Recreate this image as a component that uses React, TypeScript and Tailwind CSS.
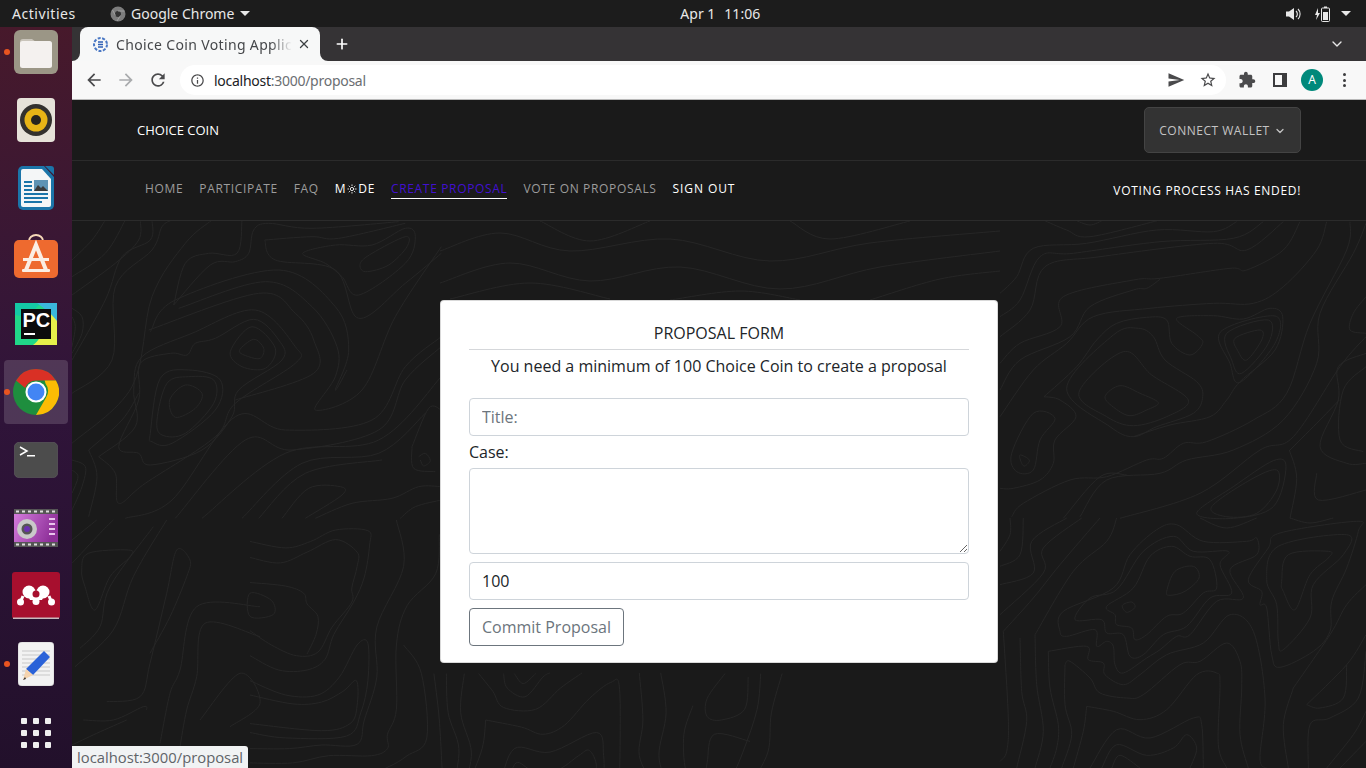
import { ChevronDown, Plus, Sun, X } from 'lucide-react';

type Pt = [number, number];
type Trace = { ox: number; oy: number; s: number; open?: Pt[][]; closed?: Pt[][] };

// smooth line through traced points (catmull-rom), coords are screen pixels
const smooth = (pts: Pt[], closed: boolean) => {
  const n = pts.length;
  const at = (i: number) => (closed ? pts[(i + n) % n] : pts[Math.max(0, Math.min(n - 1, i))]);
  let d = `M${pts[0][0].toFixed(1)} ${pts[0][1].toFixed(1)}`;
  const last = closed ? n : n - 1;
  for (let i = 0; i < last; i++) {
    const [p0, p1, p2, p3] = [at(i - 1), at(i), at(i + 1), at(i + 2)];
    const c1 = [p1[0] + (p2[0] - p0[0]) / 6, p1[1] + (p2[1] - p0[1]) / 6];
    const c2 = [p2[0] - (p3[0] - p1[0]) / 6, p2[1] - (p3[1] - p1[1]) / 6];
    d += `C${c1[0].toFixed(1)} ${c1[1].toFixed(1)} ${c2[0].toFixed(1)} ${c2[1].toFixed(1)} ${p2[0].toFixed(1)} ${p2[1].toFixed(1)}`;
  }
  return closed ? d + 'Z' : d;
};

const traces: Trace[] = [
  {
    ox: 1000, oy: 220, s: 3,
    closed: [
      [[315, 530], [360, 497], [420, 520], [475, 548], [440, 570], [390, 587], [345, 565]],
      [[237, 517], [370, 395], [455, 465], [565, 540], [500, 590], [400, 617], [320, 590]],
      [[200, 505], [340, 345], [415, 325], [460, 350], [495, 420], [590, 485], [608, 530], [580, 580], [470, 620], [400, 650], [330, 620]],
      [[705, 355], [780, 330], [785, 360], [740, 420], [715, 395]],
      [[680, 340], [805, 300], [805, 370], [725, 460], [695, 420]],
      [[662, 335], [825, 288], [825, 370], [720, 487], [690, 430]],
      [[60, 705], [88, 720], [75, 738], [65, 730]],
      [[35, 700], [100, 580], [165, 595], [120, 660], [100, 750], [50, 755]],
      [[590, 880], [700, 800], [820, 722], [858, 740], [820, 860], [700, 895]],
      [[635, 860], [750, 780], [830, 750], [830, 810], [770, 880], [680, 890]],
    ],
    open: [
      [[132, 530], [230, 440], [290, 360], [350, 310], [440, 292], [500, 300], [515, 370], [570, 405], [608, 370], [590, 345], [530, 295], [640, 287], [730, 297], [810, 265], [848, 290], [825, 390], [720, 485], [680, 540], [630, 590], [510, 615], [400, 650]],
      [[132, 530], [180, 540], [228, 590], [165, 660], [160, 730], [120, 780], [40, 805], [0, 805]],
      [[0, 220], [50, 170], [100, 85], [260, 70], [470, 30], [640, 35], [710, 5]],
      [[0, 290], [60, 240], [120, 110], [220, 100], [480, 65], [700, 55], [790, 5]],
      [[0, 350], [90, 270], [135, 140], [300, 110], [640, 70], [740, 90], [850, 5]],
      [[0, 430], [60, 370], [180, 320], [190, 230], [400, 180], [480, 175], [690, 145], [740, 150], [850, 90], [900, 5]],
      [[0, 510], [60, 420], [210, 350], [270, 260], [400, 210], [440, 205], [480, 178]],
      [[0, 590], [100, 450], [200, 370], [280, 290], [450, 265], [640, 250], [760, 250], [850, 200], [950, 90], [980, 5]],
      [[35, 890], [70, 850], [210, 780], [320, 770], [440, 720], [490, 715], [550, 670], [620, 665], [760, 600], [860, 520], [930, 310], [1040, 90], [1050, 5]],
      [[190, 895], [300, 770], [380, 765]],
      [[240, 890], [320, 780], [480, 760], [560, 720], [700, 690], [850, 600], [950, 430], [960, 280], [1060, 100], [1098, 10]],
      [[360, 895], [600, 820], [780, 690], [880, 650], [1020, 440], [1098, 350]],
      [[1098, 340], [1050, 330], [1060, 280], [1098, 230]],
      [[1098, 440], [1030, 510], [1020, 660], [1090, 695]],
      [[1098, 400], [1015, 440], [1015, 540], [960, 680], [1040, 730], [1098, 730]],
      [[870, 690], [950, 610], [1018, 540]],
      [[870, 895], [890, 775], [868, 690]],
      [[950, 760], [955, 840], [1098, 810]],
      [[130, 0], [200, 30], [270, 50], [480, 0]],
      [[225, 0], [270, 15], [310, 0]],
    ],
  },
  {
    ox: 72, oy: 220, s: 3,
    closed: [
      [[293, 540], [340, 495], [390, 520], [370, 565], [310, 592]],
      [[255, 600], [285, 490], [350, 470], [425, 480], [425, 550], [340, 640], [270, 645]],
      [[235, 640], [265, 475], [350, 450], [445, 480], [430, 570], [300, 670], [240, 665]],
      [[502, 392], [545, 358], [575, 385], [565, 415], [530, 410]],
      [[475, 395], [540, 320], [610, 385], [580, 445], [510, 440]],
      [[140, 680], [200, 540], [205, 430], [295, 400], [345, 405], [370, 370], [430, 355], [545, 298], [620, 360], [630, 420], [500, 510], [480, 590], [390, 690], [235, 735], [200, 700]],
      [[692, 100], [790, 75], [900, 75], [1000, 25], [1030, 50], [1000, 130], [860, 225], [810, 170], [760, 130]],
      [[865, 130], [900, 100], [1000, 50], [1005, 80], [950, 135], [880, 155]],
    ],
    open: [
      [[80, 710], [190, 620], [185, 510], [210, 410], [360, 340], [550, 270], [670, 380], [670, 430], [490, 550], [430, 650], [220, 790], [140, 850], [130, 760], [80, 710]],
      [[235, 335], [310, 240], [620, 150], [790, 260], [830, 390], [790, 510], [825, 450]],
      [[320, 265], [580, 185], [720, 260], [795, 380], [790, 470], [730, 570], [870, 510], [970, 290], [1108, 80]],
      [[230, 330], [560, 220], [670, 280], [725, 360], [725, 460], [490, 540]],
      [[305, 255], [415, 135], [490, 125], [530, 100], [545, 30], [590, 10], [720, 25], [980, 5]],
      [[578, 60], [720, 50], [800, 55], [1000, 10]],
      [[578, 60], [610, 120], [790, 150], [860, 295], [1000, 190], [1108, 100]],
      [[305, 255], [340, 130], [410, 100], [495, 100], [510, 0]],
      [[0, 120], [60, 60], [100, 0]],
      [[0, 170], [100, 100], [160, 0]],
      [[0, 225], [130, 130], [200, 60], [205, 0]],
      [[0, 420], [100, 240], [150, 110], [235, 60], [240, 0]],
      [[0, 520], [120, 420], [130, 200], [240, 90], [270, 20], [300, 0]],
      [[0, 670], [180, 500], [240, 230], [340, 70], [420, 0]],
      [[0, 265], [30, 290], [30, 340], [0, 400]],
      [[0, 290], [10, 320], [0, 380]],
      [[0, 720], [40, 740], [30, 800], [0, 870]],
      [[0, 750], [18, 770], [0, 820]],
      [[50, 690], [75, 770], [50, 890]],
      [[50, 690], [150, 600], [200, 520]],
      [[160, 895], [300, 840], [490, 590], [640, 630], [900, 600], [1000, 440], [1108, 350]],
      [[310, 895], [520, 660], [660, 690], [920, 630], [1000, 480], [1108, 380]],
      [[390, 895], [640, 700], [920, 660], [1108, 470]],
      [[510, 895], [690, 730], [920, 700], [1060, 580]],
      [[560, 895], [700, 760], [930, 720]],
      [[630, 895], [710, 805], [805, 800], [810, 825], [700, 895]],
      [[1108, 800], [1040, 800], [960, 835], [840, 850], [730, 895]],
      [[1108, 840], [1030, 860], [985, 895]],
      [[1020, 680], [1070, 565], [1108, 570]],
      [[1020, 680], [1025, 745], [1090, 755]],
      [[1040, 710], [1060, 700], [1075, 722], [1055, 738], [1045, 720]],
    ],
  },
  {
    ox: 250, oy: 520, s: 2.8,
    closed: [[[0, 205], [60, 225], [65, 265], [0, 270]]],
    open: [
      [[0, 60], [100, 78], [170, 60], [240, 28], [330, 30], [335, 70], [320, 160], [290, 230], [235, 320], [210, 390], [160, 420], [80, 420], [0, 380]],
      [[0, 105], [85, 120], [160, 90], [240, 55], [300, 90], [300, 130], [285, 190], [285, 230], [230, 300], [190, 370], [130, 380], [60, 350], [0, 310]],
      [[0, 175], [100, 185], [150, 205], [160, 235], [190, 270], [185, 320], [160, 375]],
      [[0, 450], [100, 490], [190, 490], [250, 440], [300, 350], [330, 345], [330, 450], [310, 540], [270, 605], [100, 610], [0, 595]],
      [[0, 490], [120, 515], [200, 510], [260, 480], [298, 450], [300, 520], [280, 570], [200, 590], [0, 570]],
      [[0, 640], [110, 640], [200, 630], [300, 628], [320, 560], [355, 440], [355, 300], [430, 130], [410, 0]],
      [[0, 680], [120, 680], [220, 660], [340, 660], [385, 640], [385, 600], [410, 530], [410, 350], [440, 240], [520, 150], [530, 40]],
      [[0, 710], [150, 720], [210, 700], [330, 710], [390, 690], [440, 660], [495, 610], [480, 430], [430, 350]],
      [[660, 560], [760, 580], [820, 600], [880, 575], [950, 500], [1010, 455], [1035, 475], [1035, 744]],
      [[660, 560], [650, 640], [610, 744]],
      [[700, 744], [740, 640], [840, 650], [970, 595], [990, 660], [990, 744]],
      [[720, 744], [745, 680], [790, 700], [860, 700], [920, 660], [950, 645], [970, 690], [950, 744]],
      [[745, 744], [760, 705], [840, 744]],
      [[640, 430], [680, 480], [710, 525], [800, 530], [870, 470], [930, 428]],
      [[710, 430], [720, 470], [770, 495], [820, 440], [840, 428]],
      [[740, 430], [765, 458], [800, 430]],
      [[1090, 428], [1100, 560], [1090, 660], [1130, 744]],
      [[1150, 428], [1165, 540], [1145, 660], [1170, 744]],
      [[1330, 430], [1280, 500], [1280, 550], [1320, 560], [1385, 530], [1395, 440]],
      [[1240, 520], [1215, 600], [1220, 700], [1250, 744]],
      [[1400, 620], [1300, 600], [1280, 680], [1270, 744]],
      [[1430, 430], [1420, 530], [1380, 650], [1340, 744]],
      [[1490, 430], [1460, 540], [1450, 650], [1400, 744]],
      [[600, 430], [590, 540], [620, 650], [600, 744]],
      [[550, 430], [555, 540], [585, 640], [570, 744]],
      [[515, 430], [530, 560], [540, 744]],
    ],
  },
  {
    ox: 1000, oy: 518, s: 3,
    closed: [
      [[180, 340], [190, 280], [340, 210], [390, 110], [470, 35], [530, 20], [610, 70], [740, 70], [770, 60], [770, 110], [690, 155], [730, 240], [650, 250], [570, 350], [530, 355], [480, 395], [440, 420], [370, 465], [345, 440], [340, 385], [320, 370], [290, 385], [285, 335], [200, 355]],
      [[225, 305], [270, 240], [350, 215], [430, 100], [520, 55], [580, 100], [685, 100], [660, 140], [695, 225], [630, 240], [560, 325], [490, 350], [430, 410], [390, 415], [370, 350], [320, 345], [305, 305]],
      [[320, 265], [400, 210], [450, 115], [515, 85], [570, 115], [630, 125], [650, 210], [610, 225], [550, 285], [500, 295], [440, 350], [405, 365], [395, 330], [350, 320], [345, 290]],
      [[500, 220], [525, 160], [580, 145], [597, 180], [555, 220], [510, 232]],
      [[367, 262], [395, 252], [405, 268], [380, 283]],
      [[845, 190], [865, 110], [985, 100], [985, 120], [930, 170], [885, 275], [850, 220]],
      [[800, 185], [835, 85], [1040, 50], [1030, 110], [940, 200], [930, 300], [850, 395], [835, 370], [830, 260]],
      [[745, 185], [805, 90], [840, 45], [1070, 10], [1075, 40], [1040, 150], [995, 250], [990, 340], [940, 400], [840, 448], [815, 410], [800, 270], [780, 260], [785, 220]],
    ],
    open: [
      [[145, 400], [260, 385], [265, 425], [310, 435], [315, 470], [370, 500], [420, 470], [500, 410], [610, 375], [690, 290], [760, 340], [795, 540], [780, 720], [800, 750]],
      [[145, 400], [150, 510], [175, 620], [170, 690], [150, 750]],
      [[195, 440], [210, 430], [270, 480], [300, 525], [380, 540], [430, 530], [540, 440], [600, 430], [680, 375], [720, 430], [725, 510], [720, 650], [745, 750]],
      [[195, 440], [195, 560], [215, 650], [185, 750]],
      [[260, 565], [340, 580], [420, 605], [500, 575], [590, 470], [650, 465], [660, 500], [655, 680], [680, 750]],
      [[260, 565], [250, 640], [220, 750]],
      [[270, 750], [350, 635], [450, 660], [580, 600], [605, 620], [610, 750]],
      [[305, 750], [350, 680], [440, 712], [520, 690], [560, 650], [590, 690], [570, 750]],
      [[335, 750], [360, 712], [420, 750]],
      [[0, 200], [100, 165], [95, 70], [200, 0]],
      [[0, 145], [60, 110], [70, 0]],
      [[0, 100], [30, 50], [30, 0]],
      [[0, 290], [130, 165], [130, 90], [245, 0]],
      [[10, 340], [100, 240], [180, 140], [300, 0]],
      [[10, 340], [25, 600], [20, 700], [0, 730]],
      [[60, 360], [65, 520], [80, 610], [50, 750]],
      [[105, 350], [110, 500], [130, 640], [105, 750]],
      [[105, 350], [220, 160], [320, 70], [350, 0]],
      [[920, 560], [1040, 440], [1098, 350]],
      [[920, 560], [960, 570], [1030, 540], [1040, 440]],
      [[1098, 400], [1075, 540], [990, 600], [930, 620], [925, 750]],
      [[1098, 580], [1060, 650], [980, 750]],
      [[880, 510], [850, 620], [865, 750]],
      [[880, 510], [990, 350], [1040, 260], [1098, 200]],
      [[1098, 670], [1020, 750]],
      [[600, 0], [680, 30], [770, 0]],
      [[870, 0], [930, 15], [1000, 0]],
    ],
  },
  {
    ox: 0, oy: 520, s: 3,
    closed: [[[245, 150], [265, 100], [385, 90], [390, 110], [330, 170], [285, 270], [255, 200]]],
    open: [
      [[216, 130], [300, 40], [340, 0]],
      [[216, 60], [290, 0]],
      [[240, 385], [300, 320], [330, 200], [460, 20]],
      [[225, 440], [340, 330], [400, 170], [500, 0]],
      [[320, 545], [420, 530], [450, 430], [500, 220], [530, 90], [570, 120], [560, 170], [510, 290], [450, 400]],
      [[600, 600], [720, 460], [780, 550], [690, 620]],
      [[780, 260], [590, 260], [540, 450], [510, 520], [480, 670]],
      [[780, 350], [615, 310], [590, 470], [560, 570], [540, 680]],
      [[250, 600], [340, 600], [430, 560], [440, 570]],
      [[216, 675], [290, 640], [380, 600]],
    ],
  },
  {
    // top middle, above the card
    ox: 440, oy: 221, s: 1,
    open: [
      [[0, 30], [60, 12], [130, 30], [230, 18], [330, 40], [430, 22], [560, 10]],
      [[0, 62], [70, 42], [150, 60], [240, 46], [340, 68], [440, 46], [560, 30]],
      [[10, 78], [90, 62], [170, 78]],
      [[230, 79], [300, 70], [360, 79]],
      [[430, 79], [500, 58], [560, 50]],
      [[100, 0], [150, 20], [210, 0]],
      [[350, 0], [390, 18], [470, 0]],
    ],
  },
];

const contourPaths = traces.flatMap((t) => {
  const map = (pts: Pt[]): Pt[] => pts.map(([x, y]) => [t.ox + x / t.s, t.oy + y / t.s]);
  return [
    ...(t.open ?? []).map((p) => smooth(map(p), false)),
    ...(t.closed ?? []).map((p) => smooth(map(p), true)),
  ];
});

const Mi = ({ d, size = 20, className = '' }: { d: string; size?: number; className?: string }) => (
  <svg width={size} height={size} viewBox="0 0 24 24" className={className} fill="currentColor">
    <path d={d} />
  </svg>
);

const Caret = ({ className = '' }: { className?: string }) => (
  <svg width="10" height="5" viewBox="0 0 10 5" className={className} fill="currentColor">
    <path d="M0 0h10L5 5z" />
  </svg>
);

const DockItem = ({ dot, active, children }: { dot?: boolean; active?: boolean; children: React.ReactNode }) => (
  <div className="relative flex h-[68px] w-[72px] shrink-0 items-center justify-center">
    {active && <div className="absolute left-1 top-0.5 h-16 w-16 rounded-[4px] bg-white/15" />}
    {dot && <div className="absolute left-1 top-1/2 z-10 h-1.5 w-1.5 -translate-y-1/2 rounded-full bg-[#e95420]" />}
    <div className="relative flex">{children}</div>
  </div>
);

const ChromeLogo = ({ size = 46 }: { size?: number }) => (
  <svg width={size} height={size} viewBox="0 0 48 48">
    <circle cx="24" cy="24" r="24" fill="#1e8e3e" />
    <path d="M24 0a24 24 0 0 1 20.8 12H24a12 12 0 0 0-11.3 7.9L3.2 12A24 24 0 0 1 24 0z" fill="#d93025" />
    <path d="M44.8 12A24 24 0 0 1 24 48l10.4-18A12 12 0 0 0 34 15.5L33 12z" fill="#fbbc04" />
    <circle cx="24" cy="24" r="11" fill="#fff" />
    <circle cx="24" cy="24" r="8.8" fill="#4285f4" />
  </svg>
);

const Dock = () => (
  <div className="flex h-full w-[72px] shrink-0 flex-col overflow-hidden bg-gradient-to-b from-[#47192b] via-[#30143a] to-[#22102b]">
    <div className="-mt-[9px] flex flex-col">
      <DockItem dot>
        <svg width="44" height="44" viewBox="0 0 44 44">
          <rect width="44" height="44" rx="6" fill="#9b9686" />
          <path d="M6 12a3 3 0 0 1 3-3h9l4 3h13a3 3 0 0 1 3 3v3H6z" fill="#c9c4ba" />
          <rect x="6" y="11" width="32" height="27" rx="2.5" fill="#f4f1ef" />
        </svg>
      </DockItem>
      <DockItem>
        <svg width="38" height="44" viewBox="0 0 38 44">
          <rect width="38" height="44" rx="4" fill="#e6e2d9" />
          <circle cx="19" cy="22" r="16" fill="#33312e" />
          <circle cx="19" cy="22" r="11.5" fill="#e7b416" />
          <circle cx="19" cy="22" r="5" fill="#26241f" />
        </svg>
      </DockItem>
      <DockItem>
        <svg width="36" height="44" viewBox="0 0 36 44">
          <path d="M5 0h21l10 11v28a5 5 0 0 1-5 5H5a5 5 0 0 1-5-5V5a5 5 0 0 1 5-5z" fill="#1b75a9" />
          <path d="M5 3h19l9 10v26a2 2 0 0 1-2 2H5a2 2 0 0 1-2-2V5a2 2 0 0 1 2-2z" fill="#f4f6f7" />
          <path d="M27 0h6a3 3 0 0 1 3 3v6z" fill="#1b75a9" />
          <path d="M6 15h8v2H6zm0 4h8v2H6zm0 4h8v2H6zm0 4h24v2H6zm0 4h24v2H6zm0 4h18v2H6z" fill="#1b75a9" />
          <rect x="16" y="14" width="14" height="11" fill="#5e93b4" />
          <path d="M16 25l4-6 3 3 2-2 5 5z" fill="#3b3b3b" />
        </svg>
      </DockItem>
      <DockItem>
        <svg width="44" height="44" viewBox="0 0 44 44">
          <path d="M15 7a7 6 0 0 1 14 0" fill="none" stroke="#f6d9b8" strokeWidth="2" />
          <rect y="6" width="44" height="38" rx="5" fill="#ee6a2f" />
          <path d="M12 36L22 11l10 25" fill="none" stroke="#fbeee4" strokeWidth="4" />
          <rect x="9" y="24" width="26" height="3" fill="#fbeee4" />
          <rect x="8" y="35" width="28" height="3" rx="1" fill="#fbeee4" />
        </svg>
      </DockItem>
      <DockItem>
        <svg width="42" height="42" viewBox="0 0 42 42">
          <rect width="42" height="42" fill="#21d789" />
          <path d="M0 0h26L12 14 0 12z" fill="#14c9a5" />
          <path d="M42 42H18C30 34 26 22 30 8l12-2z" fill="#e6f04a" />
          <path d="M22 0h20v18C36 10 30 6 22 0z" fill="#3ab8dc" />
          <rect x="6" y="6" width="30" height="30" fill="#0c0c0c" />
          <text x="7.500" y="24" fontSize="20" fontWeight="700" fill="#fff" fontFamily="'Liberation Sans', sans-serif">PC</text>
          <rect x="9" y="30" width="11" height="2" fill="#fff" />
        </svg>
      </DockItem>
      <DockItem dot active>
        <ChromeLogo />
      </DockItem>
      <DockItem>
        <svg width="44" height="36" viewBox="0 0 44 36">
          <rect x="0.25" y="0.25" width="43.5" height="35.5" rx="5" fill="#4c4c4c" stroke="#6a6a6a" strokeWidth="0.5" />
          <path d="M6 5l7 4-7 4" fill="none" stroke="#fff" strokeWidth="1.500" />
          <rect x="13" y="13" width="8" height="1.500" fill="#fff" />
        </svg>
      </DockItem>
      <DockItem>
        <svg width="44" height="38" viewBox="0 0 44 38">
          <defs>
            <linearGradient id="vid" x1="0" y1="0" x2="1" y2="0.4">
              <stop offset="0" stopColor="#d77fe0" />
              <stop offset="1" stopColor="#8d2f98" />
            </linearGradient>
          </defs>
          <rect width="44" height="38" fill="url(#vid)" />
          <rect width="44" height="5" fill="#555" />
          <rect y="33" width="44" height="5" fill="#555" />
          <path d="M2 1.500h3v2H2zm6 0h3v2H8zm6 0h3v2h-3zm6 0h3v2h-3zm6 0h3v2h-3zm6 0h3v2h-3zm6 0h3v2h-3zM2 34.500h3v2H2zm6 0h3v2H8zm6 0h3v2h-3zm6 0h3v2h-3zm6 0h3v2h-3zm6 0h3v2h-3zm6 0h3v2h-3z" fill="#ddd" />
          <circle cx="13" cy="20" r="10" fill="#c9c9c9" />
          <circle cx="13" cy="20" r="5.500" fill="#555" />
          <circle cx="13" cy="20" r="3" fill="#6b2fb0" />
          <path d="M35 9h6v2h-6zm0 5h6v2h-6zm0 5h6v2h-6zm0 5h6v2h-6z" fill="#e9c3ec" />
        </svg>
      </DockItem>
      <DockItem>
        <svg width="48" height="48" viewBox="0 0 48 48">
          <rect width="48" height="47" rx="3" fill="#a70f2e" />
          <rect x="1" y="45.500" width="46" height="1.500" fill="#c9b9bd" />
          <circle cx="17" cy="20" r="6.500" fill="#fff" />
          <circle cx="31" cy="20" r="6.500" fill="#fff" />
          <path d="M11 24L8.500 30M37 24l2.500 6" stroke="#fff" strokeWidth="3" />
          <path d="M14 20h20l-4 8H18z" fill="#fff" />
          <circle cx="8.500" cy="30" r="3.500" fill="#fff" />
          <circle cx="39.500" cy="30" r="3.500" fill="#fff" />
          <circle cx="24" cy="29.500" r="3.500" fill="#fff" />
          <circle cx="24" cy="22" r="3.500" fill="#a70f2e" />
        </svg>
      </DockItem>
      <DockItem dot>
        <svg width="36" height="44" viewBox="0 0 36 44">
          <rect width="36" height="44" rx="4" fill="#f2f2f2" stroke="#bbb" strokeWidth="0.5" />
          <path d="M4 9h28M4 13h28M4 17h28M4 21h28M4 25h28M4 29h28M4 33h28" stroke="#c8c8c8" strokeWidth="1" />
          <path d="M26 9l6 6-17 18-7-6z" fill="#2a62d8" />
          <path d="M8 27l7 6-10 5z" fill="#f4d3ae" />
          <path d="M7 35l-2 3 3-1z" fill="#333" />
        </svg>
      </DockItem>
      <DockItem>
        <div className="mt-[2px] grid grid-cols-3 gap-1.5">
          {Array.from({ length: 9 }).map((_, i) => (
            <div key={i} className="h-1.5 w-1.5 rounded-[1px] bg-[#efefef]" />
          ))}
        </div>
      </DockItem>
    </div>
  </div>
);

const TopBar = () => (
  <div className="flex h-[27px] shrink-0 items-center bg-[#1c1c1c] pl-3 pr-[15px] text-[14px] text-[#e8e8e8]">
    <span className="w-[98px] tracking-[0.55px]">Activities</span>
    <svg width="16" height="16" viewBox="0 0 16 16" className="mr-[5px]">
      <circle cx="8" cy="8" r="7.500" fill="#7d7d7d" />
      <circle cx="8" cy="8" r="3" fill="#333" />
      <path d="M8 5h6.500M5.500 9.500L2.500 4M10.500 9.500L7 15" stroke="#aaa" strokeWidth="0.8" />
    </svg>
    <span>Google Chrome</span>
    <Caret className="ml-1.5" />
    <span className="ml-[430px] flex gap-[9px]">
      <span>Apr 1</span>
      <span>11:06</span>
    </span>
    <div className="ml-auto flex items-center">
      <svg width="16" height="14" viewBox="0 0 16 14" fill="#e8e8e8">
        <path d="M0 4.500h3L8 1v12L3 9.500H0z" />
        <path d="M10 4a4 4 0 0 1 0 6M12 2a7 7 0 0 1 0 10" stroke="#e8e8e8" fill="none" strokeWidth="1.100" />
      </svg>
      <svg width="16" height="16" viewBox="0 0 16 16" className="ml-[12px]" fill="#e8e8e8">
        <path d="M4 2L1 9h2L2 14l4-7H4z" />
        <rect x="7.500" y="2" width="8" height="13.500" rx="1" fill="none" stroke="#e8e8e8" />
        <rect x="10" y="0.500" width="3" height="1.500" />
        <rect x="9" y="6" width="5" height="8" />
      </svg>
      <Caret className="ml-[11px]" />
    </div>
  </div>
);

const TabStrip = () => (
  <div className="flex h-[34px] shrink-0 items-end bg-[#353335] pl-2 pr-[21px]">
    <div className="relative flex h-[34px] w-[240px] items-center rounded-t-lg bg-[#f7f8f8] pl-[13px] pr-[9px]">
      <svg width="8" height="8" viewBox="0 0 8 8" className="absolute -left-2 bottom-0" fill="#f7f8f8">
        <path d="M8 0v8H0a8 8 0 0 0 8-8z" />
      </svg>
      <svg width="8" height="8" viewBox="0 0 8 8" className="absolute -right-2 bottom-0" fill="#f7f8f8">
        <path d="M0 0v8h8a8 8 0 0 1-8-8z" />
      </svg>
      <svg width="15" height="15" viewBox="0 0 15 15" className="shrink-0">
        <circle cx="7.500" cy="7.500" r="6.500" fill="none" stroke="#4a78c4" strokeWidth="2" strokeDasharray="3 1.500" />
        <path d="M5 5h5M5 7.500h5M5 10h5" stroke="#2f5fb5" strokeWidth="1.500" />
      </svg>
      <span className="ml-2 w-[176px] whitespace-nowrap text-[14px] tracking-[0.35px] text-[#45474a] [mask-image:linear-gradient(to_right,black_88%,transparent)]">
        Choice Coin Voting Applic
      </span>
      <X size={14} strokeWidth={2.2} className="ml-[5px] text-[#3c4043]" />
    </div>
    <Plus size={16} strokeWidth={2.5} className="mb-[9px] ml-[14px] text-white" />
    <ChevronDown size={16} strokeWidth={2} className="mb-[9px] ml-auto text-[#e8e8e8]" />
  </div>
);

const Toolbar = () => (
  <div className="flex h-[39px] shrink-0 items-center border-b border-[#b9b9b9] bg-[#f8f8f8] pl-[12px] pr-[12px] text-[#4a4a4c]">
    <Mi d="M20 11H7.830l5.590-5.590L12 4l-8 8 8 8 1.410-1.410L7.830 13H20v-2z" />
    <Mi d="M12 4l-1.410 1.410L16.170 11H4v2h12.170l-5.580 5.590L12 20l8-8z" className="ml-3 text-[#a9abad]" />
    <Mi d="M17.650 6.350A7.958 7.958 0 0 0 12 4c-4.420 0-7.990 3.580-7.990 8s3.570 8 7.990 8c3.730 0 6.840-2.550 7.730-6h-2.080A5.990 5.990 0 0 1 12 18c-3.310 0-6-2.690-6-6s2.690-6 6-6c1.660 0 3.140.69 4.220 1.780L13 11h7V4l-2.350 2.350z" className="ml-3" />
    <div className="ml-3 flex h-[30px] w-[1046px] items-center rounded-full bg-white pl-[10px] pr-[9px]">
      <Mi d="M11 7h2v2h-2zm0 4h2v6h-2zm1-9C6.480 2 2 6.480 2 12s4.480 10 10 10 10-4.480 10-10S17.520 2 12 2zm0 18c-4.410 0-8-3.590-8-8s3.590-8 8-8 8 3.590 8 8-3.590 8-8 8z" size={15} />
      <span className="ml-[9px] text-[14px] tracking-[-0.27px] text-[#202124]">
        localhost<span className="text-[#6b6e72]">:3000/proposal</span>
      </span>
      <Mi d="M2.010 21L23 12 2.010 3 2 10l15 2-15 2z" size={18} className="ml-auto" />
      <Mi d="M22 9.240l-7.190-.62L12 2 9.190 8.630 2 9.240l5.460 4.730L5.820 21 12 17.270 18.180 21l-1.630-7.030L22 9.240zM12 15.400l-3.760 2.270 1-4.280-3.320-2.880 4.380-.38L12 6.100l1.710 4.040 4.380.38-3.320 2.880 1 4.280L12 15.400z" size={18} className="ml-[14px]" />
    </div>
    <Mi d="M20.500 11H19V7c0-1.100-.9-2-2-2h-4V3.500C13 2.120 11.880 1 10.500 1S8 2.120 8 3.500V5H4c-1.100 0-1.990.9-1.990 2v3.800H3.500c1.490 0 2.700 1.210 2.700 2.700s-1.210 2.700-2.700 2.700H2V20c0 1.100.9 2 2 2h3.800v-1.500c0-1.490 1.210-2.700 2.700-2.700 1.490 0 2.700 1.210 2.700 2.700V22H17c1.100 0 2-.9 2-2v-4h1.500c1.380 0 2.500-1.120 2.500-2.500S21.880 11 20.500 11z" size={18} className="ml-[12px]" />
    <svg width="14" height="14" viewBox="0 0 14 14" className="ml-[17px]">
      <path fillRule="evenodd" d="M0 0h14v14H0zM2 2v10h7V2z" fill="#3c3c3e" />
    </svg>
    <div className="ml-[14px] flex h-[22px] w-[22px] items-center justify-center rounded-full bg-[#00897b] text-[12px] text-white">
      A
    </div>
    <div className="ml-[20px] flex flex-col gap-[2.500px]">
      <div className="h-[3px] w-[3px] rounded-full bg-[#3c3c3e]" />
      <div className="h-[3px] w-[3px] rounded-full bg-[#3c3c3e]" />
      <div className="h-[3px] w-[3px] rounded-full bg-[#3c3c3e]" />
    </div>
  </div>
);

const navClass = 'text-[#9c9c9c] hover:text-white';

const Page = () => (
  <div className="relative flex min-h-0 flex-1 flex-col bg-[#1a1a1a] font-['Open_Sans',sans-serif]">
    <header className="flex h-[61px] shrink-0 items-center justify-between border-b border-[#2b2b2b] pl-[65px] pr-[65px]">
      <span className="pt-[2px] text-[13px] text-white">CHOICE COIN</span>
      <button className="flex h-[46px] w-[157px] items-center justify-center gap-1 rounded-[5px] border border-[#444] bg-[#333] pt-[2px] text-[12px] tracking-[0.5px] text-[#c4c4c4]">
        CONNECT WALLET
        <ChevronDown size={12} strokeWidth={2.5} />
      </button>
    </header>
    <nav className="flex h-[60px] shrink-0 items-center justify-between border-b border-[#2b2b2b] pl-[73px] pr-[65px] text-[12px] tracking-[0.66px]">
      <ul className="-mt-1 flex items-center gap-4">
        <li className={navClass}>HOME</li>
        <li className={navClass}>PARTICIPATE</li>
        <li className={navClass}>FAQ</li>
        <li className="flex items-center text-white">
          M
          <Sun size={10} strokeWidth={2} className="mx-px" />
          DE
        </li>
        <li className="-mb-px border-b border-white text-[#4210d0]">CREATE PROPOSAL</li>
        <li className={navClass}>VOTE ON PROPOSALS</li>
        <li className="font-medium tracking-[0.9px] text-white">SIGN OUT</li>
      </ul>
      <span className="tracking-[0.67px] text-white">VOTING PROCESS HAS ENDED!</span>
    </nav>
    <main className="relative flex min-h-0 flex-1 justify-center overflow-hidden pt-[79px]">
      <svg viewBox="72 221 1294 547" className="absolute inset-0 h-full w-full" fill="none" stroke="#262626" strokeWidth="1">
        {contourPaths.map((d, i) => (
          <path key={i} d={d} />
        ))}
      </svg>
      <form className="relative flex h-[363px] w-[558px] flex-col rounded-[4px] border border-black/15 bg-white px-[28px] pt-[20px] text-[16px] text-[#212529]">
        <h2 className="border-b border-[#d5d7da] pb-[4px] text-center leading-[24px]">PROPOSAL FORM</h2>
        <p className="pt-[4px] text-center leading-[24px]">You need a minimum of 100 Choice Coin to create a proposal</p>
        <input
          placeholder="Title:"
          className="mt-[20px] h-[38px] w-full rounded-[4px] border border-[#ced4da] px-3 placeholder:text-[#6c757d] focus:outline-none"
        />
        <label className="mt-[4px] leading-[24px]">Case:</label>
        <textarea className="mt-[4px] h-[86px] w-full resize-y rounded-[4px] border border-[#ced4da] px-3 py-1.5 focus:outline-none" />
        <input
          defaultValue="100"
          className="mt-[8px] h-[38px] w-full rounded-[4px] border border-[#ced4da] px-3 focus:outline-none"
        />
        <button type="button" className="mt-[8px] h-[38px] w-[155px] rounded-[4px] border border-[#6c757d] text-[#6c757d]">
          Commit Proposal
        </button>
      </form>
    </main>
    <div className="absolute bottom-0 left-0 z-10 flex h-[22px] w-[176px] items-center rounded-tr-[3px] bg-[#f1f3f4] pl-[5px] text-[14.800px] text-[#5f6368]">
      localhost:3000/proposal
    </div>
  </div>
);

export default function App() {
  return (
    <div className="flex h-[768px] w-[1366px] flex-col overflow-hidden bg-[#1a1a1a] font-['Noto_Sans','Open_Sans',sans-serif]">
      <TopBar />
      <div className="flex min-h-0 flex-1">
        <Dock />
        <div className="flex min-w-0 flex-1 flex-col">
          <TabStrip />
          <Toolbar />
          <Page />
        </div>
      </div>
    </div>
  );
}
